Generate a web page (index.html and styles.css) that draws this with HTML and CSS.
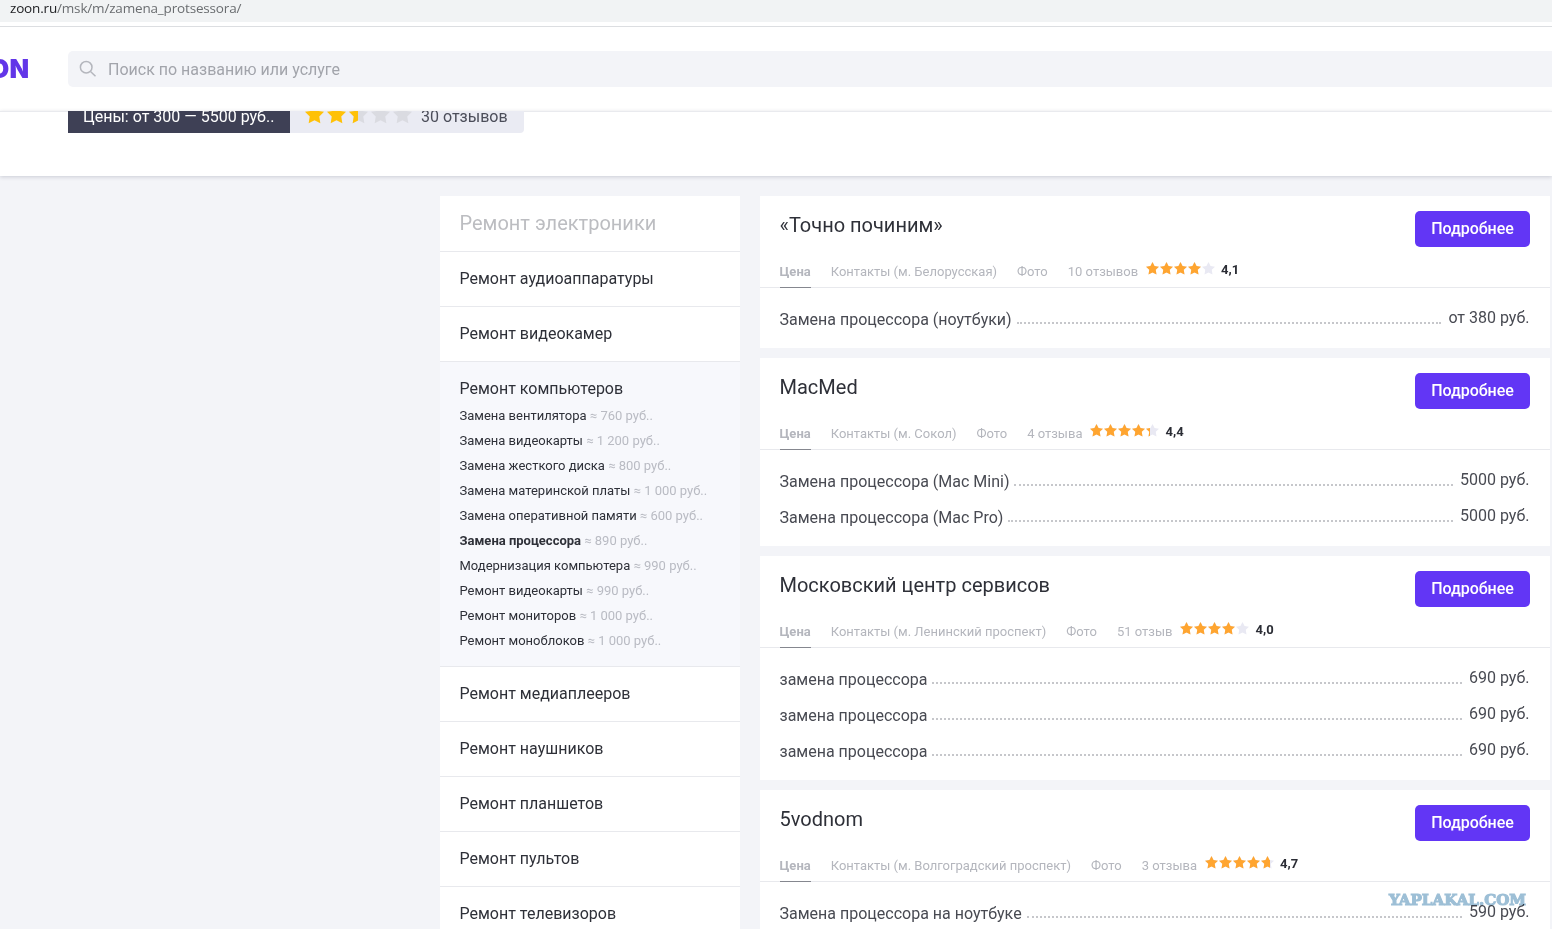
FILE: index.html
```
<!DOCTYPE html>
<html lang="ru">
<head>
<meta charset="UTF-8">
<meta name="viewport" content="width=device-width,initial-scale=1">
<title>Замена процессора</title>
<link rel="stylesheet" href="styles.css">
</head>
<body>

<svg class="defs">
  <symbol id="star" viewBox="0 0 12 12"><path d="M6 0l1.9 3.7 4.1.6-3 2.9.7 4.3L6 9.6l-3.7 1.9.7-4.3L0 4.3l4.1-.6z"/></symbol>
  <symbol id="five" viewBox="0 0 69 13">
    <use href="#star" x="0" width="13" height="13"/><use href="#star" x="14" width="13" height="13"/><use href="#star" x="28" width="13" height="13"/><use href="#star" x="42" width="13" height="13"/><use href="#star" x="56" width="13" height="13"/>
  </symbol>
</svg>

<div class="address"><b>zoon.ru</b>/msk/m/zamena_protsessora/</div>

<header class="header">
  <div class="logo">ZOON</div>
  <div class="search">
    <svg width="18" height="18" viewBox="0 0 18 18"><circle cx="7.2" cy="7.2" r="5.8"/><path d="M11.5 11.5l5 4.8"/></svg>
    <span>Поиск по названию или услуге</span>
  </div>
</header>

<section class="summary">
  <div class="summary-row">
    <div class="prices">Цены: от 300 — 5500 руб..</div>
    <div class="reviews">
      <svg class="big-stars" width="107" height="19" viewBox="0 0 107 19">
        <g class="off"><use href="#star" x="44" width="19" height="19"/><use href="#star" x="66" width="19" height="19"/><use href="#star" x="88" width="19" height="19"/></g>
        <g class="on"><use href="#star" width="19" height="19"/><use href="#star" x="22" width="19" height="19"/>
          <svg width="53" height="19"><use href="#star" x="44" width="19" height="19"/></svg></g>
      </svg>
      <span>30 отзывов</span>
    </div>
  </div>
</section>

<main class="main">
  <nav class="menu">
    <div class="item head">Ремонт электроники</div>
    <div class="item">Ремонт аудиоаппаратуры</div>
    <div class="item">Ремонт видеокамер</div>
    <div class="item open">
      <div>Ремонт компьютеров</div>
      <ul>
        <li>Замена вентилятора <i>≈ 760 руб..</i></li>
        <li>Замена видеокарты <i>≈ 1 200 руб..</i></li>
        <li>Замена жесткого диска <i>≈ 800 руб..</i></li>
        <li>Замена материнской платы <i>≈ 1 000 руб..</i></li>
        <li>Замена оперативной памяти <i>≈ 600 руб..</i></li>
        <li><b>Замена процессора</b> <i>≈ 890 руб..</i></li>
        <li>Модернизация компьютера <i>≈ 990 руб..</i></li>
        <li>Ремонт видеокарты <i>≈ 990 руб..</i></li>
        <li>Ремонт мониторов <i>≈ 1 000 руб..</i></li>
        <li>Ремонт моноблоков <i>≈ 1 000 руб..</i></li>
      </ul>
    </div>
    <div class="item">Ремонт медиаплееров</div>
    <div class="item">Ремонт наушников</div>
    <div class="item">Ремонт планшетов</div>
    <div class="item">Ремонт пультов</div>
    <div class="item">Ремонт телевизоров</div>
  </nav>

  <div class="list">
    <article class="card">
      <div class="top"><h2>«Точно починим»</h2><button>Подробнее</button></div>
      <div class="tabs">
        <b>Цена</b><span>Контакты (м. Белорусская)</span><span>Фото</span><span>10 отзывов</span>
        <div class="rate"><svg width="69" height="13"><use class="off" href="#five" width="69" height="13"/><svg width="55" height="13"><use class="on" href="#five" width="69" height="13"/></svg></svg><strong>4,1</strong></div>
      </div>
      <div class="rows">
        <div class="row"><span>Замена процессора (ноутбуки)</span><i></i><em>от 380 руб.</em></div>
      </div>
    </article>

    <article class="card">
      <div class="top"><h2>MacMed</h2><button>Подробнее</button></div>
      <div class="tabs">
        <b>Цена</b><span>Контакты (м. Сокол)</span><span>Фото</span><span>4 отзыва</span>
        <div class="rate"><svg width="69" height="13"><use class="off" href="#five" width="69" height="13"/><svg width="60" height="13"><use class="on" href="#five" width="69" height="13"/></svg></svg><strong>4,4</strong></div>
      </div>
      <div class="rows">
        <div class="row"><span>Замена процессора (Mac Mini)</span><i></i><em>5000 руб.</em></div>
        <div class="row"><span>Замена процессора (Mac Pro)</span><i></i><em>5000 руб.</em></div>
      </div>
    </article>

    <article class="card">
      <div class="top"><h2>Московский центр сервисов</h2><button>Подробнее</button></div>
      <div class="tabs">
        <b>Цена</b><span>Контакты (м. Ленинский проспект)</span><span>Фото</span><span>51 отзыв</span>
        <div class="rate"><svg width="69" height="13"><use class="off" href="#five" width="69" height="13"/><svg width="55" height="13"><use class="on" href="#five" width="69" height="13"/></svg></svg><strong>4,0</strong></div>
      </div>
      <div class="rows">
        <div class="row"><span>замена процессора</span><i></i><em>690 руб.</em></div>
        <div class="row"><span>замена процессора</span><i></i><em>690 руб.</em></div>
        <div class="row"><span>замена процессора</span><i></i><em>690 руб.</em></div>
      </div>
    </article>

    <article class="card">
      <div class="top"><h2>5vodnom</h2><button>Подробнее</button></div>
      <div class="tabs">
        <b>Цена</b><span>Контакты (м. Волгоградский проспект)</span><span>Фото</span><span>3 отзыва</span>
        <div class="rate"><svg width="69" height="13"><use class="off" href="#five" width="69" height="13"/><svg width="65" height="13"><use class="on" href="#five" width="69" height="13"/></svg></svg><strong>4,7</strong></div>
      </div>
      <div class="rows">
        <div class="row"><span>Замена процессора на ноутбуке</span><i></i><em>590 руб.</em></div>
      </div>
    </article>
  </div>
</main>

<svg class="mark" width="140" height="18"><text x="1" y="14" textLength="137" lengthAdjust="spacingAndGlyphs">YAPLAKAL.COM</text></svg>

</body>
</html>
```
FILE: styles.css
```
*{margin:0;padding:0;box-sizing:border-box}
body{height:929px;overflow:hidden;background:#f3f4f8;font-family:Roboto,Arial,sans-serif;font-size:16px;color:#2e3038}
.defs{display:none}
i,em{font-style:normal}

.address{height:22px;padding-left:10px;background:#f1f3f4;font:13.5px/16px "Open Sans","Noto Sans",sans-serif;letter-spacing:-.17px;color:#6a6d70}
.address b{font-weight:400;color:#202124}

/* шапка */
.header{display:flex;align-items:center;height:89px;padding-top:5px;background:#fff linear-gradient(#dcdee1,#dcdee1) 0 4px/100% 1px no-repeat}
.logo{display:flex;justify-content:flex-end;width:29px;margin-right:39px;overflow:hidden;font:900 25.5px/30px Inter,sans-serif;color:#6236e8}
.search{display:flex;align-items:center;flex:1;height:36px;padding-left:11px;background:#f3f4f8;border-radius:5px 0 0 5px;color:#a2a4ab}
.search svg{margin-right:11px;fill:none;stroke:#b4b6bd;stroke-width:1.5}
.search span{padding-top:1px}

.summary{height:65px;background:#fff linear-gradient(#e9eaee,#e9eaee) 0 0/100% 1px no-repeat;overflow:hidden;box-shadow:0 1px 4px rgba(60,65,90,.22);position:relative}
.summary-row{display:flex;height:36px;margin:-14px 0 0 68px;line-height:39px}
.prices{width:222px;padding-left:15px;background:#3e4055;color:#fff;white-space:nowrap}
.reviews{display:flex;width:234px;padding-left:15px;background:#eaebf3;border-radius:0 4px 4px 0;color:#4b4d59}
.big-stars{margin:8px 9px 0 0}
.big-stars .on{fill:#ffc107}
.big-stars .off{fill:#dadbe1}

.main{display:flex;align-items:flex-start;gap:20px;padding:20px 2px 0 440px}

/* меню */
.menu{width:300px;background:#fff}
.item{height:55px;padding-left:19.5px;border-top:1px solid #e8e9ed;line-height:53px}
.item.head{border-top:0;font-size:20px;line-height:54px;color:#bcbdc1}
.item.open{height:305px;background:#f7f8fc}
.item.open ul{margin-top:-12px;list-style:none;font-size:13px;line-height:25px}
.item.open li i{color:#b9bbc3}
.item.open>div{height:53px}

/* карточки */
.list{flex:1}
.card{margin-bottom:10px;background:#fff}
.top{display:flex;justify-content:space-between;height:60px;padding:15px 20px 0 19.5px}
h2{font-size:20px;font-weight:400;line-height:28px}
button{width:115px;height:36px;padding-bottom:1px;border:0;border-radius:5px;background:#6236f5;font:500 16px/34px Roboto,sans-serif;letter-spacing:-.05px;color:#fff}
.tabs{display:flex;height:32px;padding-left:19.5px;border-bottom:1px solid #e8e9ed;font-size:13px;line-height:31px;color:#b4b6bd}
.tabs>span,.tabs>b{margin-right:20px}
.tabs>b{height:32px;border-bottom:1px solid #85878f;font-weight:700}
.rate{display:flex;margin-left:-12px;line-height:27px;color:#2b2d35}
.rate>svg{margin:6px 6px 0 0}
.rate strong{font-weight:700}
.rate .on{fill:#ffa530}
.rate .off{fill:#e9e9f3}
.rows{padding:12px 20px 12px 19.5px}
.row{display:flex;height:36px;line-height:39px;color:#484a52}
.row i{flex:1;height:24px;margin:0 7px 0 5px;border-bottom:2px dotted #c6c7cb}
.row em{line-height:35px;margin-right:.5px}

.mark{position:absolute;left:1388px;top:891px;mix-blend-mode:multiply}
.mark text{font:bold 15px "DejaVu Serif",serif;fill:#9dbfd6;stroke:#9dbfd6;stroke-width:1.1}
```
